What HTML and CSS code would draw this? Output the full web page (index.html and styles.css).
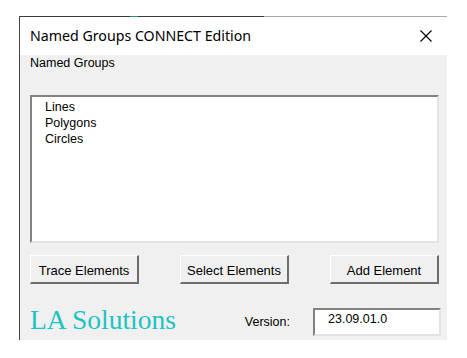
FILE: index.html
```html
<!DOCTYPE html>
<html lang="en">
<head>
  <meta charset="UTF-8">
  <title>Named Groups CONNECT Edition</title>
  <link rel="stylesheet" href="styles.css">
</head>
<body>
  <div class="window">
    <div class="frame-top"></div>
    <div class="titlebar">
      <span class="title">Named Groups CONNECT Edition</span>
      <svg class="close" width="12" height="12" viewBox="0 0 12 12">
        <path d="M0.5 0.5 L11.5 11.5 M11.5 0.5 L0.5 11.5" stroke="#000" stroke-width="1.1" fill="none"/>
      </svg>
    </div>
    <div class="client">
      <div class="label">Named Groups</div>
      <div class="listbox">
        <div class="item">Lines</div>
        <div class="item">Polygons</div>
        <div class="item">Circles</div>
      </div>
      <div class="buttons">
        <button class="btn">Trace Elements</button>
        <button class="btn">Select Elements</button>
        <button class="btn">Add Element</button>
      </div>
      <div class="footer">
        <span class="brand">LA Solutions</span>
        <span class="version-label">Version:</span>
        <div class="version-box">23.09.01.0</div>
      </div>
    </div>
  </div>
</body>
</html>
```

FILE: styles.css
```css
/* dialog window */
body {
  margin: 0;
  padding: 0;
  background-color: #fff;
  font-family: "Liberation Sans", Arial, sans-serif;
}

.window {
  margin: 16px 0 0 19px;
  width: 428px;
  border-left: 1px solid #444;
  box-sizing: border-box;
}

.frame-top {
  height: 1px;
  margin-left: -1px;
  background: linear-gradient(to right, #3c3c3c 0, #3c3c3c 111px, #1f9a5a 111px, #1f9a5a 119px, #3c3c3c 119px, #3c3c3c 245px, #a8a8a8 245px);
}

.titlebar {
  height: 38px;
  background-color: #fff;
  display: flex;
  align-items: center;
  justify-content: space-between;
  padding: 0 15px 0 10px;
}

.title {
  font-family: "Noto Sans", "Open Sans", sans-serif;
  font-size: 14.2px;
  color: #000;
  position: relative;
  top: -1px;
}

.close {
  display: block;
}

.client {
  background-color: #f0f0f0;
  padding: 1px 8px 4px 10px;
  font-size: 12.5px;
  color: #000;
}

.label {
  line-height: 15px;
}

.listbox {
  margin-top: 24px;
  height: 148px;
  box-sizing: border-box;
  background-color: #fff;
  border-top: 2px solid #828282;
  border-left: 2px solid #828282;
  border-right: 2px solid #e3e3e3;
  border-bottom: 2px solid #e3e3e3;
  padding: 2px 0 0 13px;
}

.item {
  line-height: 16px;
}

.buttons {
  margin-top: 12px;
  display: flex;
  justify-content: space-between;
}

.btn {
  width: 109px;
  height: 29px;
  box-sizing: border-box;
  background-color: #f0f0f0;
  border-top: 1px solid #fff;
  border-left: 1px solid #fff;
  border-right: 2px solid #6d6d6d;
  border-bottom: 2px solid #6d6d6d;
  font-family: "Liberation Sans", Arial, sans-serif;
  font-size: 13px;
  color: #000;
  padding: 3px 0 0 0;
  margin: 0;
  line-height: 15px;
}

.footer {
  margin-top: 24px;
  display: flex;
  align-items: flex-start;
  height: 28px;
}

.brand {
  font-family: "Liberation Serif", "Times New Roman", serif;
  font-size: 27.5px;
  line-height: 24px;
  color: #1cc3c3;
}

.version-label {
  margin-left: auto;
  margin-top: 7px;
  line-height: 15px;
}

.version-box {
  margin-left: 23px;
  margin-right: -2px;
  width: 128px;
  height: 28px;
  box-sizing: border-box;
  background-color: #fff;
  border-top: 2px solid #828282;
  border-left: 2px solid #828282;
  border-right: 2px solid #e3e3e3;
  border-bottom: 2px solid #e3e3e3;
  padding: 2px 0 0 13px;
  line-height: 15px;
}
```
